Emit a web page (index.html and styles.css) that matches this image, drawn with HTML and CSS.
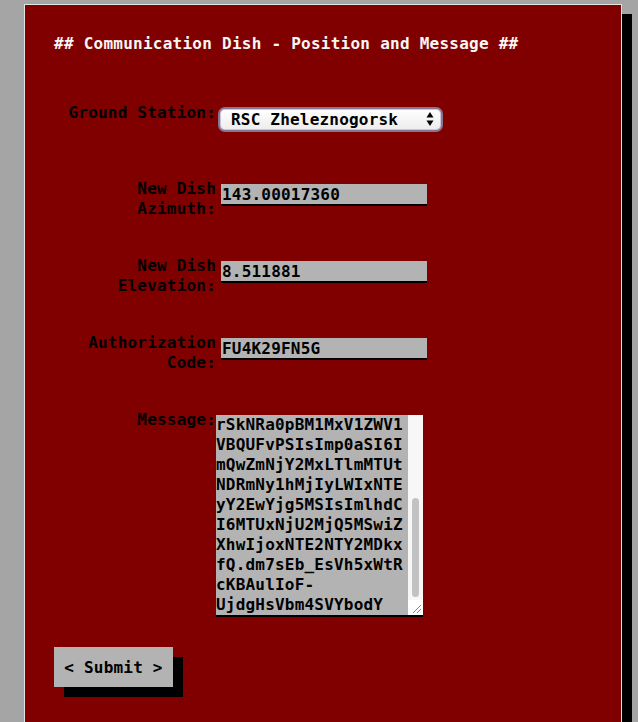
FILE: index.html
```html
<!DOCTYPE html>
<html lang="en">
<head>
<meta charset="utf-8">
<title>Communication Dish</title>
<link rel="stylesheet" href="styles.css">
</head>
<body>
<div class="panel">
  <h1 class="title">## Communication Dish - Position and Message ##</h1>
  <form class="form">
    <div class="row row-station">
      <label class="lbl" for="station">Ground Station:</label>
      <div class="select-wrap">
        <select id="station" class="select"><option>RSC Zheleznogorsk</option></select>
        <svg class="arrows" width="8" height="16" viewBox="0 0 8 16"><path d="M4 1 L7.5 6.5 L0.5 6.5 Z" fill="#000"/><path d="M4 15 L7.5 9.5 L0.5 9.5 Z" fill="#000"/></svg>
      </div>
    </div>
    <div class="row">
      <label class="lbl" for="az">New Dish Azimuth:</label>
      <input id="az" class="field" type="text" value="143.00017360">
    </div>
    <div class="row">
      <label class="lbl" for="el">New Dish Elevation:</label>
      <input id="el" class="field" type="text" value="8.511881">
    </div>
    <div class="row">
      <label class="lbl" for="auth">Authorization Code:</label>
      <input id="auth" class="field" type="text" value="FU4K29FN5G">
    </div>
    <div class="row row-msg">
      <label class="lbl" for="msg">Message:</label>
      <div class="msgbox">
        <textarea id="msg" class="msg" spellcheck="false">eyJ0eXAiOiJKV1QiLCJhbGciOiJIUzI1NiJ9.eyJpc3MiOiJodHRwczovL2F1dGguZGlzaC5jb21pIiwic3ViIjoiZ3JvdW5kc3RhdGlvbiIsImtleSI6IlpYUnpVV1Z0R2FxTTBhRUJ3UmtsT1VqQ0pHWkRUaEJhVm1aS2hmMmrSkNRa0pBM1MxV1ZWV1VBQUFvPSIsImp0aSI6ImQwZmNjY2MxLTlmMTUtNDRmNy1hMjIyLWIxNTEyY2EwYjg5MSIsImlhdCI6MTUxNjU2MjQ5MSwiZXhwIjoxNTE2NTY2MDkxfQ.dm7sEb_EsVh5xWtRcKBAulIoF-UjdgHsVbm4SVYbodY</textarea>
        <div class="sbar">
          <div class="track"><div class="thumb"></div></div>
          <div class="corner">
            <svg width="15" height="15" viewBox="0 0 15 15"><path d="M13 5 L5 13 M13 9 L9 13" stroke="#8a8a8a" stroke-width="1" fill="none"/></svg>
          </div>
        </div>
      </div>
    </div>
    <button class="submit" type="button">&lt; Submit &gt;</button>
  </form>
</div>
<script src="script.js"></script>
</body>
</html>
```

FILE: styles.css
```css
html, body {
  margin: 0;
  padding: 0;
}
body {
  background: #a5a5a5;
  font-family: "DejaVu Sans Mono", "Liberation Mono", monospace;
  font-weight: bold;
  font-size: 16px;
  letter-spacing: 0.2px;
  overflow: hidden;
}
.panel {
  margin: 4px 0 0 24px;
  width: 598px;
  background: #800000;
  border: 1px solid #e4e4e4;
  box-shadow: 10px 10px 0 #000;
  padding: 29px 0 80px 29px;
  box-sizing: border-box;
}
.title {
  margin: 0 0 49px 0;
  font-size: 16px;
  line-height: 20px;
  font-weight: bold;
  color: #f6f6f6;
  letter-spacing: 0.25px;
}
.form {
  display: flex;
  flex-direction: column;
}
.row {
  display: grid;
  grid-template-columns: 162px auto;
  align-items: start;
  height: 77px;
}
.row-station {
  height: 76px;
}
.row-msg {
  height: 207px;
}
.lbl {
  text-align: right;
  line-height: 20px;
  color: #000;
}
.select-wrap {
  position: relative;
  margin: 4px 0 0 2px;
  width: 225px;
  height: 25px;
}
.select {
  appearance: none;
  -webkit-appearance: none;
  width: 225px;
  height: 25px;
  box-sizing: border-box;
  border: 2px solid #857695;
  box-shadow: inset 0 0 0 1px #cfc6d8;
  border-radius: 7px;
  background: linear-gradient(#ffffff, #ececec);
  font: inherit;
  letter-spacing: 0.2px;
  color: #000;
  padding: 0 0 0 11px;
  line-height: 21px;
  outline: none;
}
.arrows {
  position: absolute;
  right: 9px;
  top: 4px;
}
.field {
  margin: 5px 0 0 5px;
  width: 206px;
  height: 22px;
  box-sizing: border-box;
  border: none;
  border-bottom: 2px solid #000;
  background: #b3b3b3;
  font: inherit;
  letter-spacing: 0.2px;
  line-height: 20px;
  color: #000;
  padding: 0 1px;
  outline: none;
}
.msgbox {
  margin: 5px 0 0 0;
  width: 207px;
  height: 202px;
  box-sizing: border-box;
  border-bottom: 2px solid #000;
  display: flex;
}
.msg {
  width: 192px;
  height: 200px;
  box-sizing: border-box;
  border: none;
  background: #b3b3b3;
  font: inherit;
  letter-spacing: 0.2px;
  line-height: 20px;
  color: #000;
  padding: 0;
  margin: 0;
  outline: none;
  overflow: hidden;
  resize: none;
  word-wrap: break-word;
}
.sbar {
  width: 15px;
  height: 200px;
  display: flex;
  flex-direction: column;
  background: #f7f7f7;
}
.track {
  flex: 1;
  padding-top: 83px;
  box-sizing: border-box;
}
.thumb {
  width: 7px;
  height: 99px;
  margin-left: 4px;
  border-radius: 4px;
  background: #c2c2c2;
}
.corner {
  height: 15px;
  background: #ffffff;
}
.corner svg {
  display: block;
}
.submit {
  align-self: flex-start;
  margin-top: 30px;
  width: 119px;
  height: 40px;
  border: none;
  background: #b3b3b3;
  box-shadow: 10px 10px 0 #000;
  font: inherit;
  letter-spacing: 0.2px;
  color: #000;
  padding: 0;
  text-align: center;
}
```

FILE: script.js
```js
var ta = document.getElementById('msg');
ta.scrollTop = ta.scrollHeight;
```
